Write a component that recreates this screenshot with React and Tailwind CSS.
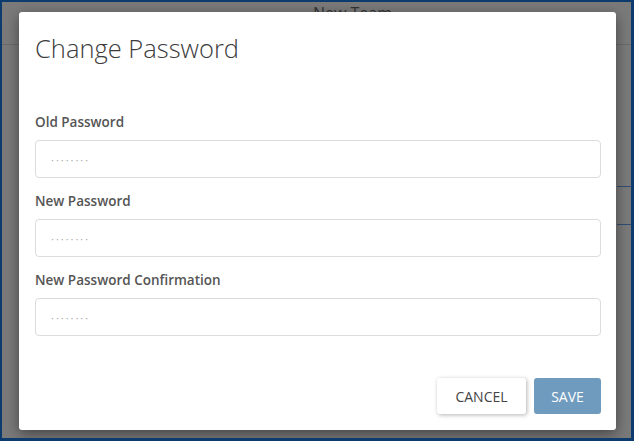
import React from 'react';

const Field = ({ label }) => (
  <div className="flex flex-col">
    <label className="text-[13.5px] font-semibold text-[#555] leading-[18px] mb-[9px]">{label}</label>
    <input
      type="password"
      placeholder="········"
      className="h-[38px] w-full rounded-[4px] border border-[#dcdcdc] px-[15px] text-[11px] tracking-[2px] text-[#555] placeholder:text-[#aaa] outline-none"
    />
  </div>
);

export default function App() {
  return (
    <div
      className="w-[634px] h-[441px] bg-[#0c3b6d] pt-[2px] pl-[2px] pr-[3px] pb-[3px]"
      style={{ fontFamily: '"Open Sans", Lato, sans-serif' }}
    >
      <div className="relative w-full h-full bg-[#7a7a7a] overflow-hidden">
        {/* page behind the overlay */}
        <div className="flex justify-center pt-[3px] h-[43px] border-b border-[#6a6a6a]">
          <span className="text-[16px] leading-[16px] text-[#333] ml-[72px]">New Team</span>
        </div>
        <div className="absolute right-0 top-[184px] w-[14px] border-t border-[#2f4f72]" />
        <div className="absolute right-0 top-[222px] w-[14px] border-t border-[#2f4f72]" />

        {/* dialog */}
        <div className="absolute left-[17px] top-[10px] w-[597px] h-[418px] bg-white rounded-[3px] shadow-[0_4px_14px_rgba(0,0,0,0.45)] flex flex-col pl-[16px] pr-[15px]">
          <h2 className="text-[25.5px] font-light text-[#3c3c3c] mt-[21px] leading-[30px]">Change Password</h2>
          <div className="flex flex-col gap-[14px] mt-[50px]">
            <Field label="Old Password" />
            <Field label="New Password" />
            <Field label="New Password Confirmation" />
          </div>
          <div className="flex justify-end gap-[8px] mt-[42px]">
            <button className="h-[36px] w-[89px] rounded-[3px] bg-white text-[14px] text-[#444] shadow-[1px_1px_4px_rgba(0,0,0,0.3)]">CANCEL</button>
            <button className="h-[36px] w-[67px] rounded-[3px] bg-[#6f9bbf] text-[14px] text-white">SAVE</button>
          </div>
        </div>
      </div>
    </div>
  );
}
